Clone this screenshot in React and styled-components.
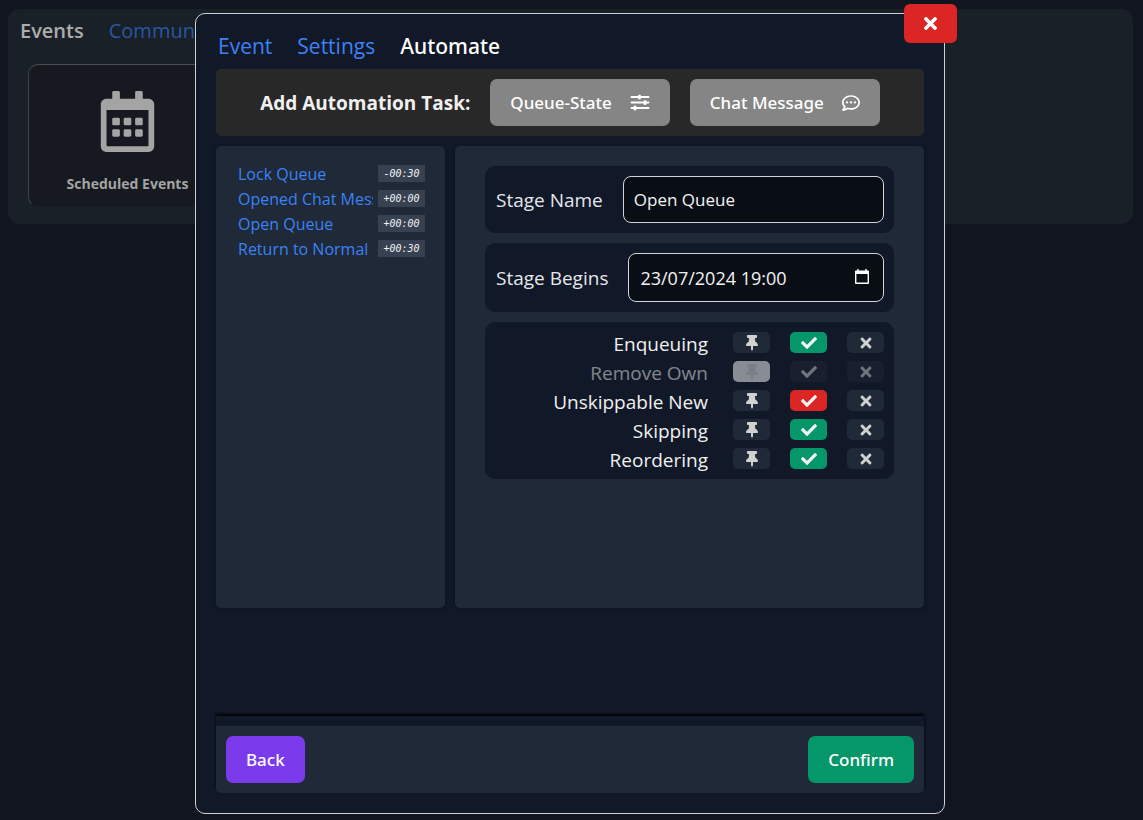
import React, { useState } from "react";
import styled, { createGlobalStyle, css } from "styled-components";
import {
  FaCheck,
  FaRegCalendarAlt,
  FaRegCommentDots,
  FaThumbtack,
  FaTimes,
} from "react-icons/fa";

const GlobalStyle = createGlobalStyle`
  *, *::before, *::after { box-sizing: border-box; }
  body {
    margin: 0;
    min-height: 100vh;
    background: #11151f;
    color: #f0f0f0;
    font-family: "Segoe UI", "Open Sans", "Noto Sans", sans-serif;
    font-size: 17px;
  }
  button, input { font: inherit; color: inherit; }
  button { border: 0; cursor: pointer; }
`;

const mediumFont = css`
  font-family: "Segoe UI", "Noto Sans", sans-serif;
  font-weight: 500;
`;

const Page = styled.div`
  min-height: 100vh;
  padding: 9px 10px 9px 8px;
`;

const Panel = styled.section`
  padding: 9px 20px 17px;
  border-radius: 12px;
  background: #1a2028;
`;

const PageTabs = styled.nav`
  display: flex;
  gap: 25px;
  margin: 0 -8px 20px;
  line-height: 26px;
  font-size: 20px;
`;

const PageTab = styled.a`
  color: ${(p) => (p.$active ? "#acacac" : "#2857a2")};
  font-weight: ${(p) => (p.$active ? 600 : 400)};
  text-decoration: none;
`;

const EventCard = styled.button`
  display: flex;
  flex-direction: column;
  align-items: center;
  gap: 22px;
  width: 199px;
  padding: 26px 0 12px;
  border: 1px solid #1a1e24;
  border-top-color: #4b4d50;
  border-left-color: #404347;
  border-radius: 10px;
  background: #16191f;
  color: #a4a4a4;
  font-size: 14px;
  font-weight: 700;
  line-height: 20px;
`;

const Overlay = styled.div`
  position: fixed;
  inset: 0;
  display: flex;
  justify-content: center;
  padding: 13px 13px 6px 10px;
`;

const Dialog = styled.section`
  position: relative;
  display: flex;
  flex-direction: column;
  width: 100%;
  max-width: 750px;
  padding: 20px;
  border: 1px solid #d0d1d4;
  border-radius: 10px;
  background: #111827;
`;

const CloseButton = styled.button`
  position: absolute;
  top: -10px;
  right: -13px;
  display: flex;
  align-items: center;
  justify-content: center;
  width: 53px;
  height: 39px;
  border-radius: 6px;
  background: #dc2626;
  color: #fff;
`;

const Tabs = styled.nav`
  display: flex;
  gap: 25px;
  padding: 0 2px 10px;
  font-size: 21px;
  line-height: 25px;
`;

const Tab = styled.a`
  ${(p) => p.$active && mediumFont}
  color: ${(p) => (p.$active ? "#fff" : "#3b82f6")};
  text-decoration: none;
`;

const TaskBar = styled.div`
  display: flex;
  align-items: center;
  justify-content: center;
  gap: 20px;
  padding: 10px;
  border-radius: 5px;
  background: #282828;
`;

const TaskTitle = styled.h2`
  margin: 0;
  font-size: 19px;
  font-weight: 700;
`;

const Button = styled.button`
  ${mediumFont}
  display: flex;
  align-items: center;
  gap: 18px;
  height: 47px;
  padding: 0 20px;
  border-radius: 7px;
  background: ${(p) => p.$color};
  color: #fff;
`;

const Columns = styled.div`
  display: grid;
  grid-template-columns: 229px 1fr;
  gap: 10px;
  min-height: 462px;
  margin-top: 10px;
`;

const Box = styled.div`
  border-radius: 5px;
  background: #1f2937;
  box-shadow: 0 1px 4px rgba(0, 0, 0, 0.3);
`;

const StageList = styled(Box).attrs({ as: "ul" })`
  margin: 0;
  padding: 15px 20px;
  list-style: none;
`;

const StageItem = styled.li`
  display: flex;
  align-items: center;
  gap: 5px;
  height: 25px;
  padding-left: 2px;
`;

const StageLink = styled.a`
  flex: 1;
  overflow: hidden;
  color: #3b82f6;
  font-size: 16px;
  white-space: nowrap;
  text-decoration: none;
`;

const Offset = styled.span`
  width: 47px;
  background: #374151;
  color: #f0f0f0;
  font: italic 10px/17px "DejaVu Sans Mono", monospace;
  text-align: center;
`;

const Editor = styled(Box)`
  display: flex;
  flex-direction: column;
  gap: 10px;
  padding: 20px 30px;
`;

const cardStyle = css`
  border-radius: 10px;
  background: #111827;
`;

const Field = styled.div`
  ${cardStyle}
  display: flex;
  align-items: center;
  gap: 20px;
  padding: 10px;
`;

const FieldLabel = styled.label`
  padding-left: 1px;
  color: #e5e7eb;
  font-size: 19px;
`;

const InputFrame = styled.div`
  display: flex;
  flex: 1;
  align-items: center;
  min-width: 0;
  height: ${(p) => (p.$tall ? 49 : 47)}px;
  padding: 0 ${(p) => (p.$tall ? 14 : 10)}px 0 ${(p) => (p.$tall ? 11 : 10)}px;
  border: 1px solid #d1d5db;
  border-radius: 8px;
  background: #090d14;
  font-size: ${(p) => (p.$tall ? 18 : 17)}px;
`;

const Input = styled.input`
  flex: 1;
  min-width: 0;
  padding: 0;
  border: 0;
  outline: 0;
  background: none;
  color: #f3f4f6;
`;

const PickerButton = styled.button`
  display: flex;
  padding: 0 0 2px;
  background: none;
  color: #fff;
`;

const Toggles = styled.div`
  ${cardStyle}
  padding: 6px 10px;
`;

const ToggleRow = styled.div`
  display: flex;
  align-items: center;
  justify-content: flex-end;
  gap: 20px;
  height: 29px;
  opacity: ${(p) => (p.$muted ? 0.5 : 1)};
`;

const ToggleLabel = styled.span`
  padding: 2px 5px 0 0;
  font-size: 19px;
`;

const Toggle = styled.button`
  display: flex;
  align-items: center;
  justify-content: center;
  width: 37px;
  height: 21px;
  padding: 0;
  border-radius: 5px;
  background: ${(p) => p.$color || "#1f2937"};
  color: ${(p) => p.$ink || "#d1d1d1"};
`;

const Spacer = styled.div`
  flex: 1;
`;

const Footer = styled.footer`
  padding-top: 10px;
  border-radius: 0 0 5px 5px;
  background: #111827;
  box-shadow: 0 -2px 3px #000;
`;

const FooterBar = styled.div`
  display: flex;
  justify-content: space-between;
  padding: 10px;
  border-radius: 0 0 5px 5px;
  background: #1f2937;
`;

const STAGES = [
  ["Lock Queue", "-00:30"],
  ["Opened Chat Message", "+00:00"],
  ["Open Queue", "+00:00"],
  ["Return to Normal", "+00:30"],
];

const GREEN = "#059669";
const RED = "#dc2626";

const SETTINGS = [
  { name: "Enqueuing", on: GREEN },
  { name: "Remove Own", pinned: true },
  { name: "Unskippable New", on: RED },
  { name: "Skipping", on: GREEN },
  { name: "Reordering", on: GREEN },
];

function SlidersIcon() {
  return (
    <svg width="20" height="18" viewBox="0 0 20 18" fill="none" stroke="currentColor" strokeLinecap="round" aria-hidden="true">
      <path d="M1.5 3h17M1.5 8.5h17M1.5 14h17" strokeWidth="1.8" />
      <path d="M9.5 2v2M15 7.5v2M5 13v2" strokeWidth="3" />
    </svg>
  );
}

function CalendarIcon() {
  return (
    <svg width="14" height="15" viewBox="0 0 14 15" fill="currentColor" aria-hidden="true">
      <path
        fillRule="evenodd"
        d="M2.3 0h1.4v1.4h6.6V0h1.4v1.4H13a1 1 0 0 1 1 1V14a1 1 0 0 1-1 1H1a1 1 0 0 1-1-1V2.4a1 1 0 0 1 1-1h1.3zM1.4 5v8.6h11.2V5z"
      />
    </svg>
  );
}

function SettingRow({ name, on, pinned }) {
  return (
    <ToggleRow $muted={pinned} role="group" aria-label={name}>
      <ToggleLabel>{name}</ToggleLabel>
      <Toggle
        aria-label="Keep"
        aria-pressed={!!pinned}
        $color={pinned && "#fff"}
        $ink={pinned && "#e4e4e4"}
      >
        <FaThumbtack size={16} />
      </Toggle>
      <Toggle aria-label="Enable" aria-pressed={!!on} $color={on} $ink={on && "#f3f4f6"}>
        <FaCheck size={16} />
      </Toggle>
      <Toggle aria-label="Disable" aria-pressed={false}>
        <FaTimes size={16} />
      </Toggle>
    </ToggleRow>
  );
}

export default function App() {
  const [name, setName] = useState("Open Queue");
  const [begins, setBegins] = useState("23/07/2024 19:00");

  return (
    <>
      <GlobalStyle />
      <Page>
        <Panel>
          <PageTabs>
            <PageTab href="#events" $active>Events</PageTab>
            <PageTab href="#community">Community</PageTab>
          </PageTabs>
          <EventCard>
            <FaRegCalendarAlt size={61} />
            Scheduled Events
          </EventCard>
        </Panel>
      </Page>
      <Overlay>
        <Dialog role="dialog" aria-modal="true">
          <CloseButton aria-label="Close">
            <FaTimes size={19} />
          </CloseButton>
          <Tabs>
            <Tab href="#event">Event</Tab>
            <Tab href="#settings">Settings</Tab>
            <Tab href="#automate" $active>Automate</Tab>
          </Tabs>
          <TaskBar>
            <TaskTitle>Add Automation Task:</TaskTitle>
            <Button $color="#858585">
              Queue-State <SlidersIcon />
            </Button>
            <Button $color="#858585">
              Chat Message <FaRegCommentDots size={18} />
            </Button>
          </TaskBar>
          <Columns>
            <StageList>
              {STAGES.map(([label, offset]) => (
                <StageItem key={label}>
                  <StageLink href="#stage">{label}</StageLink>
                  <Offset>{offset}</Offset>
                </StageItem>
              ))}
            </StageList>
            <Editor>
              <Field>
                <FieldLabel htmlFor="stage-name">Stage Name</FieldLabel>
                <InputFrame>
                  <Input id="stage-name" value={name} onChange={(e) => setName(e.target.value)} />
                </InputFrame>
              </Field>
              <Field>
                <FieldLabel htmlFor="stage-begins">Stage Begins</FieldLabel>
                <InputFrame $tall>
                  <Input id="stage-begins" value={begins} onChange={(e) => setBegins(e.target.value)} />
                  <PickerButton aria-label="Pick a date">
                    <CalendarIcon />
                  </PickerButton>
                </InputFrame>
              </Field>
              <Toggles>
                {SETTINGS.map((s) => (
                  <SettingRow key={s.name} {...s} />
                ))}
              </Toggles>
            </Editor>
          </Columns>
          <Spacer />
          <Footer>
            <FooterBar>
              <Button $color="#7c3aed">Back</Button>
              <Button $color={GREEN}>Confirm</Button>
            </FooterBar>
          </Footer>
        </Dialog>
      </Overlay>
    </>
  );
}
